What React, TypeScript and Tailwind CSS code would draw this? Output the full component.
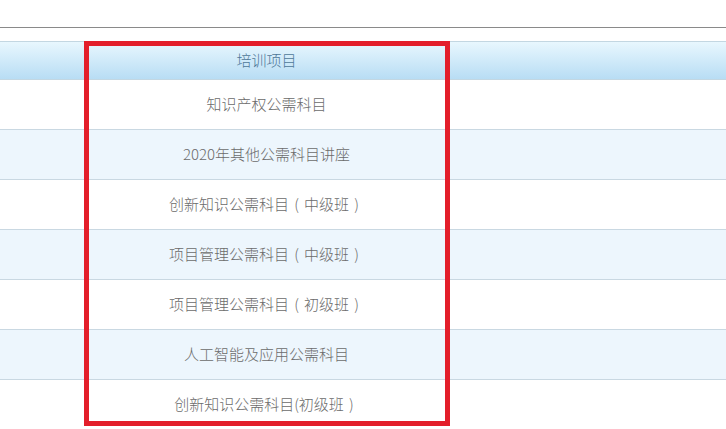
const rows = [
  '知识产权公需科目',
  '2020年其他公需科目讲座',
  '创新知识公需科目（中级班）',
  '项目管理公需科目（中级班）',
  '项目管理公需科目（初级班）',
  '人工智能及应用公需科目',
  '创新知识公需科目(初级班）',
];

// Full-width brackets in the reference sit centered in a full em box,
// so draw them as a narrow bracket inside a 1em wide cell.
function Label({ text }: { text: string }) {
  const parts = text.split(/([（）])/);
  return (
    <>
      {parts.map((p, i) =>
        p === '（' || p === '）' ? (
          <span key={i} className="inline-block w-[15px] text-center">
            {p === '（' ? '(' : ')'}
          </span>
        ) : (
          <span key={i}>{p}</span>
        ),
      )}
    </>
  );
}

export default function App() {
  return (
    <div
      className="h-[429px] w-[726px] overflow-hidden bg-white text-[15px] font-light"
      style={{ fontFamily: '"Microsoft YaHei", "Noto Sans CJK SC", sans-serif' }}
    >
      <div className="h-[27px]" />
      <div className="h-px bg-[#8a8a8a]" />
      <div className="h-[13px]" />

      <div className="relative">
        <div className="grid h-[39px] grid-cols-[86px_361px_1fr] border-y border-[#c3d7e2] bg-gradient-to-b from-[#e8f7fe] to-[#b8ddf4]">
          <div />
          <div className="flex items-center justify-center text-[#4f7898]">培训项目</div>
          <div />
        </div>

        {rows.map((name, i) => (
          <div
            key={name}
            className={`grid h-[50px] grid-cols-[86px_361px_1fr] border-b border-[#c9d8e2] ${
              i % 2 === 1 ? 'bg-[#edf6fd]' : 'bg-white'
            }`}
          >
            <div />
            <div className="flex items-center justify-center text-[#6b6b6b]">
              <Label text={name} />
            </div>
            <div />
          </div>
        ))}

        {/* red highlight box drawn over the column */}
        <div className="pointer-events-none absolute left-[84px] top-0 h-[385px] w-[366px] border-[5px] border-[#e31e2a]" />
      </div>
    </div>
  );
}
